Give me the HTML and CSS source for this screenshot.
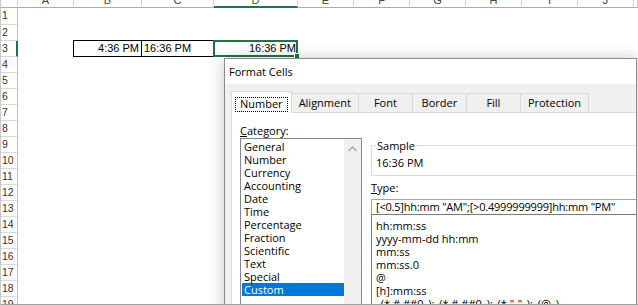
FILE: index.html
```html
<!DOCTYPE html>
<html lang="en">
<head>
    <meta charset="UTF-8">
    <title>Format Cells</title>
    <link rel="stylesheet" href="styles.css">
</head>
<body>
    <div class="page">
        <!-- worksheet behind the dialog -->
        <div class="sheet">
            <div class="corner"></div>
            <div class="col-head"><span>A</span></div>
            <div class="col-head"><span>B</span></div>
            <div class="col-head"><span>C</span></div>
            <div class="col-head col-head--active"><span>D</span></div>
            <div class="col-head"><span>E</span></div>
            <div class="col-head"><span>F</span></div>
            <div class="col-head"><span>G</span></div>
            <div class="col-head"><span>H</span></div>
            <div class="col-head"><span>I</span></div>
            <div class="col-head"><span>J</span></div>
            <div class="col-head"></div>

            <div class="row-head">1</div>
            <div class="row-head">2</div>
            <div class="row-head row-head--active">3</div>
            <div class="cell cell--boxed cell--right cell-b">4:36 PM</div>
            <div class="cell cell--boxed cell-c">16:36 PM</div>
            <div class="cell cell--selected cell--right cell-d">16:36 PM</div>
            <div class="row-head">4</div>
            <div class="row-head">5</div>
            <div class="row-head">6</div>
            <div class="row-head">7</div>
            <div class="row-head">8</div>
            <div class="row-head">9</div>
            <div class="row-head">10</div>
            <div class="row-head">11</div>
            <div class="row-head">12</div>
            <div class="row-head">13</div>
            <div class="row-head">14</div>
            <div class="row-head">15</div>
            <div class="row-head">16</div>
            <div class="row-head">17</div>
            <div class="row-head">18</div>
            <div class="row-head">19</div>
        </div>

        <!-- Format Cells dialog -->
        <div class="dialog">
            <div class="dialog-title">Format Cells</div>
            <div class="dialog-body">
                <div class="tabs">
                    <div class="tab tab--active"><span class="tab-focus">Number</span></div>
                    <div class="tab">Alignment</div>
                    <div class="tab">Font</div>
                    <div class="tab">Border</div>
                    <div class="tab">Fill</div>
                    <div class="tab">Protection</div>
                </div>
                <div class="tab-panel">
                    <div class="category">
                        <div class="field-label"><u>C</u>ategory:</div>
                        <div class="listbox">
                            <ul class="listbox-items">
                                <li>General</li>
                                <li>Number</li>
                                <li>Currency</li>
                                <li>Accounting</li>
                                <li>Date</li>
                                <li>Time</li>
                                <li>Percentage</li>
                                <li>Fraction</li>
                                <li>Scientific</li>
                                <li>Text</li>
                                <li>Special</li>
                                <li class="is-selected">Custom</li>
                            </ul>
                            <div class="scrollbar">
                                <svg width="9" height="6" viewBox="0 0 9 6">
                                    <polyline points="0.5,5 4.5,1 8.5,5" fill="none" stroke="#a6a6a6" stroke-width="1.4"/>
                                </svg>
                            </div>
                        </div>
                    </div>
                    <div class="format">
                        <fieldset class="sample">
                            <legend>Sample</legend>
                            <div class="sample-value">16:36 PM</div>
                        </fieldset>
                        <div class="field-label field-label--type"><u>T</u>ype:</div>
                        <div class="type-input">[&lt;0.5]hh:mm "AM";[&gt;0.4999999999]hh:mm "PM"</div>
                        <ul class="type-list">
                            <li>hh:mm:ss</li>
                            <li>yyyy-mm-dd hh:mm</li>
                            <li>mm:ss</li>
                            <li>mm:ss.0</li>
                            <li>@</li>
                            <li>[h]:mm:ss</li>
                            <li>_(* #,##0_);_(* #,##0_);_(* "-"_);_(@_)</li>
                        </ul>
                    </div>
                </div>
            </div>
        </div>
    </div>
</body>
</html>
```

FILE: styles.css
```css
/* Page frame */
body {
    margin: 0;
    background: #fff;
}

.page {
    position: relative;
    width: 638px;
    height: 305px;
    overflow: hidden;
    background: #fff;
}

/* thin screenshot edge, drawn over everything */
.page::after {
    content: "";
    position: absolute;
    inset: 0;
    border-left: 1px solid #c8c8c8;
    border-bottom: 1px solid #a0a0a0;
    pointer-events: none;
    z-index: 5;
}

/* Worksheet */
.sheet {
    display: grid;
    grid-template-columns: 18px 56px 68px 72px 84px 56px 56px 56px 56px 56px 56px 1fr;
    grid-template-rows: 8px 17px;
    grid-auto-rows: 16px;
    font-family: "Liberation Sans", Arial, sans-serif;
    font-size: 11px;
    color: #000;
}

.corner,
.col-head {
    box-sizing: border-box;
    border-right: 1px solid #d4d4d4;
    border-bottom: 1px solid #ababab;
}

/* only the lower half of the header letters is on screen */
.col-head {
    display: flex;
    align-items: flex-end;
    justify-content: center;
    overflow: hidden;
    color: #444;
}

.col-head span {
    line-height: 11px;
    margin-bottom: 1px;
}

.col-head--active {
    border-bottom: 2px solid #217346;
    color: #217346;
}

.col-head--active span {
    margin-bottom: 0;
}

.row-head {
    grid-column: 1;
    box-sizing: border-box;
    padding-left: 2px;
    line-height: 15px;
    font-size: 10.5px;
    color: #333;
    border-right: 1px solid #bdbdbd;
    border-bottom: 1px solid #d8d8d8;
}

.row-head--active {
    border-right: 2px solid #217346;
}

.cell {
    padding: 0 2px;
    line-height: 15px;
    white-space: nowrap;
}

.cell--right {
    text-align: right;
}

.cell-b { grid-column: 3; }
.cell-c { grid-column: 4; }
.cell-d { grid-column: 5; }

.cell--boxed {
    margin: 0 1px 1px 0;
    outline: 1px solid #000;
}

.cell--selected {
    position: relative;
    margin: 0 1px 1px 0;
    padding-right: 1px;
    outline: 2px solid #217346;
    outline-offset: -1px;
}

/* fill handle */
.cell--selected::after {
    content: "";
    position: absolute;
    right: -3px;
    bottom: -3px;
    width: 4px;
    height: 4px;
    background: #217346;
    border: 1px solid #fff;
}

/* Dialog */
.dialog {
    position: absolute;
    left: 224px;
    top: 58px;
    width: 413px;
    height: 262px;
    box-sizing: border-box;
    border: 1px solid #8a8a8a;
    background: #f0f0f0;
    box-shadow: 0 0 14px rgba(0, 0, 0, 0.22);
    overflow: hidden;
    font-family: "Open Sans", "Noto Sans", sans-serif;
    font-size: 11px;
    color: #000;
}

.dialog-title {
    height: 25px;
    line-height: 25px;
    padding-left: 4px;
    background: #fff;
}

.dialog-body {
    padding-left: 6px;
}

/* Tabs */
.tabs {
    display: flex;
    align-items: flex-end;
    padding-top: 7px;
    position: relative;
    z-index: 1;
}

.tab {
    box-sizing: border-box;
    height: 19px;
    min-width: 54px;
    padding: 0 7px;
    line-height: 18px;
    text-align: center;
    white-space: nowrap;
    border-top: 1px solid #d9d9d9;
    border-right: 1px solid #d9d9d9;
}

.tab--active {
    display: flex;
    align-items: flex-start;
    height: 22px;
    margin-bottom: -1px;
    padding: 5px 3px 1px;
    border-left: 1px solid #d9d9d9;
    background: #fff;
}

.tab-focus {
    padding: 0 4px 2px;
    line-height: 11px;
    border: 1px dotted #000;
}

.tab-panel {
    display: flex;
    width: 470px;
    height: 230px;
    box-sizing: border-box;
    padding: 10px 0 0 8px;
    background: #fff;
    border: 1px solid #d9d9d9;
}

.field-label {
    line-height: 15px;
}

/* Category list */
.category {
    flex: none;
    width: 122px;
}

.listbox {
    display: flex;
    height: 190px;
    border: 1px solid #828790;
}

.listbox-items {
    flex: 1;
    margin: 0;
    padding: 1px 0 0 1px;
    list-style: none;
}

.listbox-items li {
    padding-left: 2px;
    line-height: 13px;
    white-space: nowrap;
}

.listbox-items .is-selected {
    background: #0078d7;
    color: #fff;
}

.scrollbar {
    flex: none;
    display: flex;
    justify-content: center;
    width: 17px;
    padding-top: 7px;
    box-sizing: border-box;
    background: #f0f0f0;
}

/* Sample / Type */
.format {
    flex: none;
    width: 300px;
    margin-left: 9px;
}

.sample {
    margin: 15px 0 0;
    padding: 2px 4px 5px;
    min-width: 0;
    border: 1px solid #dcdcdc;
}

.sample legend {
    padding: 0 1px;
    line-height: 15px;
}

.sample-value {
    line-height: 15px;
}

.field-label--type {
    margin-top: 4px;
}

.type-input {
    margin-top: 4px;
    height: 15px;
    box-sizing: border-box;
    padding-left: 4px;
    line-height: 13px;
    letter-spacing: -0.2px;
    white-space: nowrap;
    border: 1px solid #a6a6a6;
    border-bottom: none;
}

.type-list {
    height: 120px;
    margin: 0;
    padding: 4px 0 0 4px;
    list-style: none;
    border: 1px solid #7a7a7a;
}

.type-list li {
    line-height: 13px;
    white-space: nowrap;
}
```
